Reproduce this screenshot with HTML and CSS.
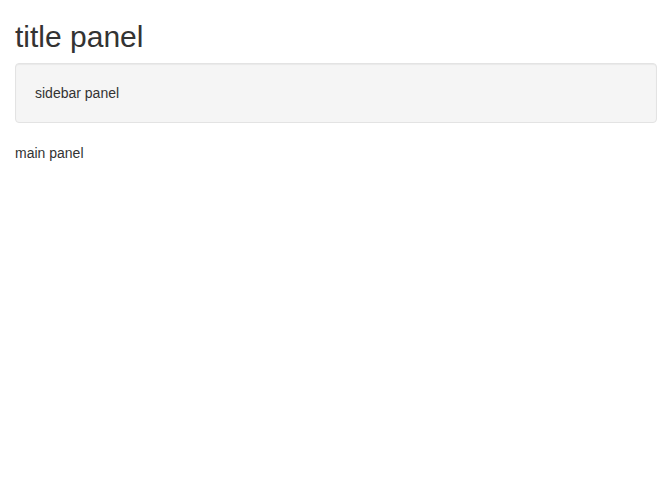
FILE: index.html
```html
<!DOCTYPE html>
<html>
<head>
<meta charset="utf-8">
<link rel="stylesheet" href="styles.css">
</head>
<body>
<div class="container">
  <h2 class="title">title panel</h2>
  <div class="row">
    <div class="well">sidebar panel</div>
    <div class="main">main panel</div>
  </div>
</div>
</body>
</html>
```

FILE: styles.css
```css
html, body {
  margin: 0;
  padding: 0;
  background: #fff;
}
body {
  font-family: "Liberation Sans", Arial, sans-serif;
  font-size: 14px;
  line-height: 20px;
  color: #333;
}
.container {
  padding: 0 15px;
}
.title {
  font-size: 30px;
  font-weight: 500;
  line-height: 33px;
  margin: 20px 0 10px;
  color: #333;
}
.well {
  min-height: 20px;
  padding: 19px;
  margin-bottom: 20px;
  background: #f5f5f5;
  border: 1px solid #e3e3e3;
  border-radius: 4px;
  box-shadow: inset 0 1px 1px rgba(0,0,0,0.05);
}
.main {
  margin: 0;
}
```
